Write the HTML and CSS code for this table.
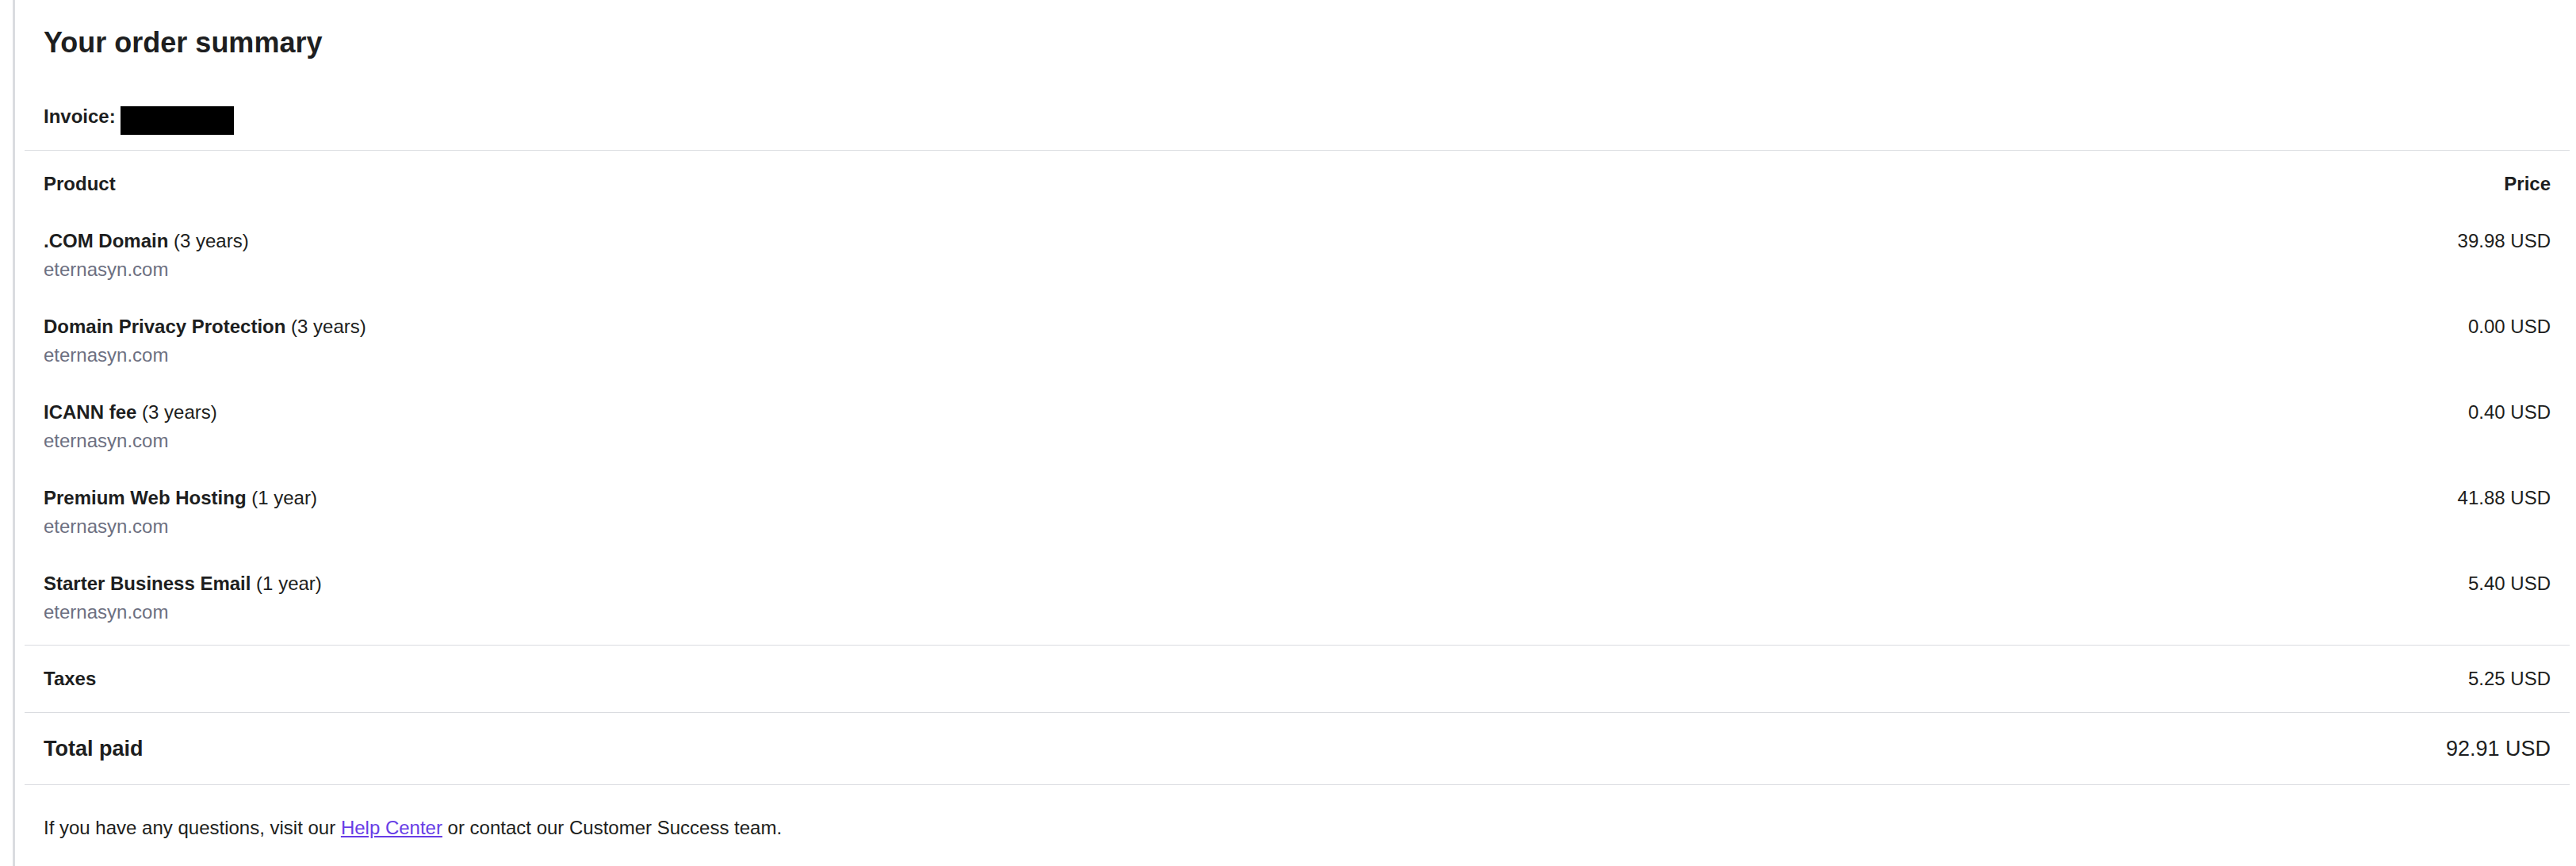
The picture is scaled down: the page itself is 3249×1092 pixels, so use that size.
FILE: index.html
```html
<!DOCTYPE html>
<html lang="en">

<head>
    <meta charset="UTF-8">
    <meta name="viewport" content="width=device-width, initial-scale=1.0">
    <title>Your order summary</title>
    <link rel="stylesheet" href="styles.css">
</head>

<body>

    <div class="mail">
        <div class="summary">
            <div class="summary-head">
                <h1 class="title">Your order summary</h1>
                <div class="invoice">Invoice: <span class="redacted"></span></div>
            </div>

            <div class="products">
                <div class="row row-head">
                    <span>Product</span>
                    <span>Price</span>
                </div>
                <div class="row item">
                    <div>
                        <div class="item-name"><b>.COM Domain</b> (3 years)</div>
                        <div class="item-domain">eternasyn.com</div>
                    </div>
                    <div class="price">39.98 USD</div>
                </div>
                <div class="row item">
                    <div>
                        <div class="item-name"><b>Domain Privacy Protection</b> (3 years)</div>
                        <div class="item-domain">eternasyn.com</div>
                    </div>
                    <div class="price">0.00 USD</div>
                </div>
                <div class="row item">
                    <div>
                        <div class="item-name"><b>ICANN fee</b> (3 years)</div>
                        <div class="item-domain">eternasyn.com</div>
                    </div>
                    <div class="price">0.40 USD</div>
                </div>
                <div class="row item">
                    <div>
                        <div class="item-name"><b>Premium Web Hosting</b> (1 year)</div>
                        <div class="item-domain">eternasyn.com</div>
                    </div>
                    <div class="price">41.88 USD</div>
                </div>
                <div class="row item">
                    <div>
                        <div class="item-name"><b>Starter Business Email</b> (1 year)</div>
                        <div class="item-domain">eternasyn.com</div>
                    </div>
                    <div class="price">5.40 USD</div>
                </div>
            </div>

            <div class="row taxes">
                <b>Taxes</b>
                <span>5.25 USD</span>
            </div>

            <div class="row total">
                <b>Total paid</b>
                <span>92.91 USD</span>
            </div>

            <p class="footer-note">If you have any questions, visit our <a href="#">Help Center</a> or contact our Customer Success team.</p>
        </div>
    </div>

</body>

</html>
```

FILE: styles.css
```css
body {
    margin: 0;
    font-family: "Liberation Sans", Arial, sans-serif;
    font-size: 24px;
    line-height: 36px;
    color: #1d1e20;
    background-color: #fff;
}

.mail {
    margin: 0 8px 0 16px;
    padding-left: 12px;
    border-left: 3px solid #dadce0;
    min-height: 1092px;
    box-sizing: border-box;
}

.summary-head {
    padding: 32px 24px 24px;
    border-bottom: 1px solid #dadce0;
}

.title {
    margin: 0 0 53px;
    font-size: 36px;
    line-height: 44px;
    font-weight: bold;
}

.invoice {
    font-weight: bold;
}

.redacted {
    display: inline-block;
    width: 143px;
    height: 36px;
    margin-bottom: -5px;
    vertical-align: -10px;
    background-color: #000;
}

.row {
    display: flex;
    justify-content: space-between;
    padding: 0 24px;
}

.products {
    padding-bottom: 5px;
    border-bottom: 1px solid #dadce0;
}

.row-head {
    padding-top: 24px;
    padding-bottom: 18px;
    font-weight: bold;
}

.item {
    padding-top: 18px;
    padding-bottom: 18px;
}

.item-name b {
    font-weight: bold;
}

.item-domain {
    color: #6d7081;
}

.price {
    text-align: right;
}

.taxes {
    padding-top: 24px;
    padding-bottom: 24px;
    border-bottom: 1px solid #dadce0;
}

.total {
    padding-top: 24px;
    padding-bottom: 24px;
    font-size: 27px;
    line-height: 42px;
    border-bottom: 1px solid #dadce0;
}

.footer-note {
    margin: 0;
    padding: 36px 24px;
}

.footer-note a {
    color: #673de6;
    text-decoration: underline;
}
```
